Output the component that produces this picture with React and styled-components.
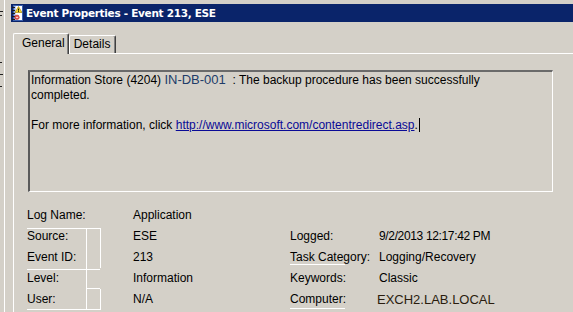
import React from "react";
import styled, { createGlobalStyle, css } from "styled-components";

const GlobalStyle = createGlobalStyle`
  html, body { margin: 0; padding: 0; background: #d4d0c8; }
  body { font-family: "Liberation Sans", Arial, sans-serif; font-size: 12px; color: #000; }
  * { box-sizing: border-box; }
`;

const Screen = styled.div`
  display: flex;
  width: 573px;
  height: 312px;
  overflow: hidden;
  background: #d4d0c8;
`;

const Backdrop = styled.div`
  flex: 0 0 5px;
  border-right: 1px solid #ffffff;
  background:
    linear-gradient(#202020, #202020) 0 11px / 3px 1px no-repeat,
    linear-gradient(#202020, #202020) 0 15px / 2px 1px no-repeat,
    linear-gradient(#202020, #202020) 0 62px / 2px 1px no-repeat,
    linear-gradient(#202020, #202020) 0 74px / 3px 1px no-repeat,
    linear-gradient(#202020, #202020) 0 86px / 2px 1px no-repeat,
    #d4d0c8;
`;

const Window = styled.div`
  flex: 1;
  min-width: 0;
  padding: 4px 0 0 6px;
  display: flex;
  flex-direction: column;
`;

const TitleBar = styled.div`
  height: 18px;
  background: #0a246a;
  display: flex;
  align-items: center;
  padding-left: 1px;
  gap: 3px;
`;

const Title = styled.span`
  color: #ffffff;
  font-family: "DejaVu Sans", Verdana, sans-serif;
  font-weight: bold;
  font-size: 10.5px;
  letter-spacing: -0.3px;
  white-space: nowrap;
  line-height: 18px;
`;

const Body = styled.div`
  flex: 1;
  padding: 11px 0 0 2px;
  display: flex;
  flex-direction: column;
`;

const TabStrip = styled.div`
  display: flex;
  align-items: flex-end;
  height: 20px;
  position: relative;
  z-index: 1;
`;

const Tab = styled.div`
  height: ${(p) => (p.$active ? "21px" : "18px")};
  margin-bottom: ${(p) => (p.$active ? "-1px" : "0")};
  padding: ${(p) => (p.$active ? "2px 3px 0 8px" : "0 5px 0 4px")};
  background: #d4d0c8;
  border-top: 1px solid #ffffff;
  border-left: 1px solid #ffffff;
  border-right: 1px solid #404040;
  box-shadow: inset -1px 0 0 #808080;
  border-radius: 2px 2px 0 0;
  display: flex;
  align-items: ${(p) => (p.$active ? "flex-start" : "center")};
  font-size: 12px;
  line-height: 15px;
  white-space: nowrap;
`;

const Panel = styled.div`
  flex: 1;
  border-top: 1px solid #ffffff;
  border-left: 1px solid #ffffff;
  padding: 16px 0 0 14px;
  margin-right: -40px;
`;

const MessageBox = styled.div`
  width: 525px;
  height: 122px;
  border-top: 2px solid #6a6a6a;
  border-left: 2px solid #5a5a5a;
  border-right: 1px solid #ffffff;
  border-bottom: 1px solid #ffffff;
  background: #d4d0c8;
  padding: 0 0 0 1px;
  line-height: 15px;
  font-size: 12px;
`;

const Para = styled.p`
  margin: 0 0 15px 0;
  white-space: nowrap;
`;

const Highlight = styled.span`
  color: #213c69;
  font-size: 13px;
`;

const Link = styled.a`
  color: #0a0a96;
  text-decoration: underline;
`;

const Caret = styled.span`
  display: inline-block;
  width: 1px;
  height: 14px;
  background: #000;
  vertical-align: -3px;
  margin-left: 1px;
`;

const Fields = styled.div`
  margin: 13px 0 0 -1px;
  display: grid;
  grid-template-columns: 106px 157px 89px 1fr;
  grid-auto-rows: 21px;
  line-height: 21px;
  font-size: 12px;
  white-space: nowrap;
`;

const line = (x, y, w, h) =>
  `linear-gradient(#ffffff, #ffffff) ${x}px ${y}px / ${w}px ${h}px no-repeat`;

const Cell = styled.div`
  margin-left: ${(p) => p.$shift || 0}px;
  color: ${(p) => p.$ink || "#000"};
  font-size: ${(p) => p.$size || 12}px;
  letter-spacing: ${(p) => (p.$tight ? "-0.35px" : "normal")};
  ${(p) =>
    p.$marks &&
    css`
      background: ${p.$marks};
    `}
`;

const LogIcon = () => (
  <svg width="11" height="16" viewBox="0 0 11 16" aria-hidden="true">
    <rect x="1.5" y="0.5" width="9" height="15" fill="#ffffff" stroke="#3a5fae" />
    <rect x="2" y="1" width="1.5" height="14" fill="#8fa8dc" />
    {[2, 5, 8, 11, 14].map((y) => (
      <rect key={y} x="0" y={y} width="3" height="1" fill="#1a1a1a" />
    ))}
    <path d="M6.5 1.5 L10 7.5 L3 7.5 Z" fill="#f7d722" stroke="#9a7a00" strokeWidth="0.6" />
    <rect x="6.1" y="3.6" width="0.9" height="2" fill="#000" />
    <rect x="6.1" y="6.1" width="0.9" height="0.8" fill="#000" />
    <circle cx="5" cy="12.3" r="2.3" fill="#e2574f" stroke="#b02020" strokeWidth="0.5" />
    <rect x="3.9" y="11.9" width="2.2" height="0.8" fill="#fff" />
  </svg>
);

const rows = [
  { l: "Source:", v: "ESE", r: "Logged:", rv: "9/2/2013 12:17:42 PM", tight: true,
    lm: [line(0, 2, 73, 1), line(59, 2, 1, 19), line(73, 2, 1, 19)].join(","), rm: null },
  { l: "Event ID:", v: "213", r: "Task Category:", rv: "Logging/Recovery",
    lm: [line(59, 0, 1, 21), line(73, 0, 1, 21)].join(","), rm: line(0, 17, 55, 1) },
  { l: "Level:", v: "Information", r: "Keywords:", rv: "Classic",
    lm: [line(0, 1, 73, 1), line(59, 0, 1, 21), line(59, 20, 14, 1)].join(","), rm: null },
  { l: "User:", v: "N/A", r: "Computer:", rv: "EXCH2.LAB.LOCAL", strong: true,
    lm: [line(0, 20, 73, 1), line(59, 0, 1, 21), line(73, 0, 1, 21)].join(","), rm: line(0, 19, 55, 1) },
];

export default function App() {
  return (
    <>
      <GlobalStyle />
      <Screen>
        <Backdrop />
        <Window>
          <TitleBar>
            <LogIcon />
            <Title>Event Properties - Event 213, ESE</Title>
          </TitleBar>
          <Body>
            <TabStrip>
              <Tab $active>General</Tab>
              <Tab>Details</Tab>
            </TabStrip>
            <Panel>
              <MessageBox>
                <Para>
                  Information Store (4204) <Highlight>IN-DB-001</Highlight>&nbsp;&nbsp;: The backup procedure has been successfully
                  <br />
                  completed.
                </Para>
                <Para>
                  For more information, click{" "}
                  <Link href="#">http://www.microsoft.com/contentredirect.asp</Link>.
                  <Caret />
                </Para>
              </MessageBox>
              <Fields>
                <Cell>Log Name:</Cell>
                <Cell>Application</Cell>
                <Cell />
                <Cell />
                {rows.map((r) => (
                  <React.Fragment key={r.l}>
                    <Cell $marks={r.lm}>{r.l}</Cell>
                    <Cell>{r.v}</Cell>
                    <Cell $marks={r.rm}>{r.r}</Cell>
                    <Cell
                      $shift={r.strong ? -2 : 0}
                      $ink={r.strong ? "#2a1c0e" : "#000"}
                      $size={r.strong ? 13 : 12}
                      $tight={r.tight}
                    >
                      {r.rv}
                    </Cell>
                  </React.Fragment>
                ))}
              </Fields>
            </Panel>
          </Body>
        </Window>
      </Screen>
    </>
  );
}
